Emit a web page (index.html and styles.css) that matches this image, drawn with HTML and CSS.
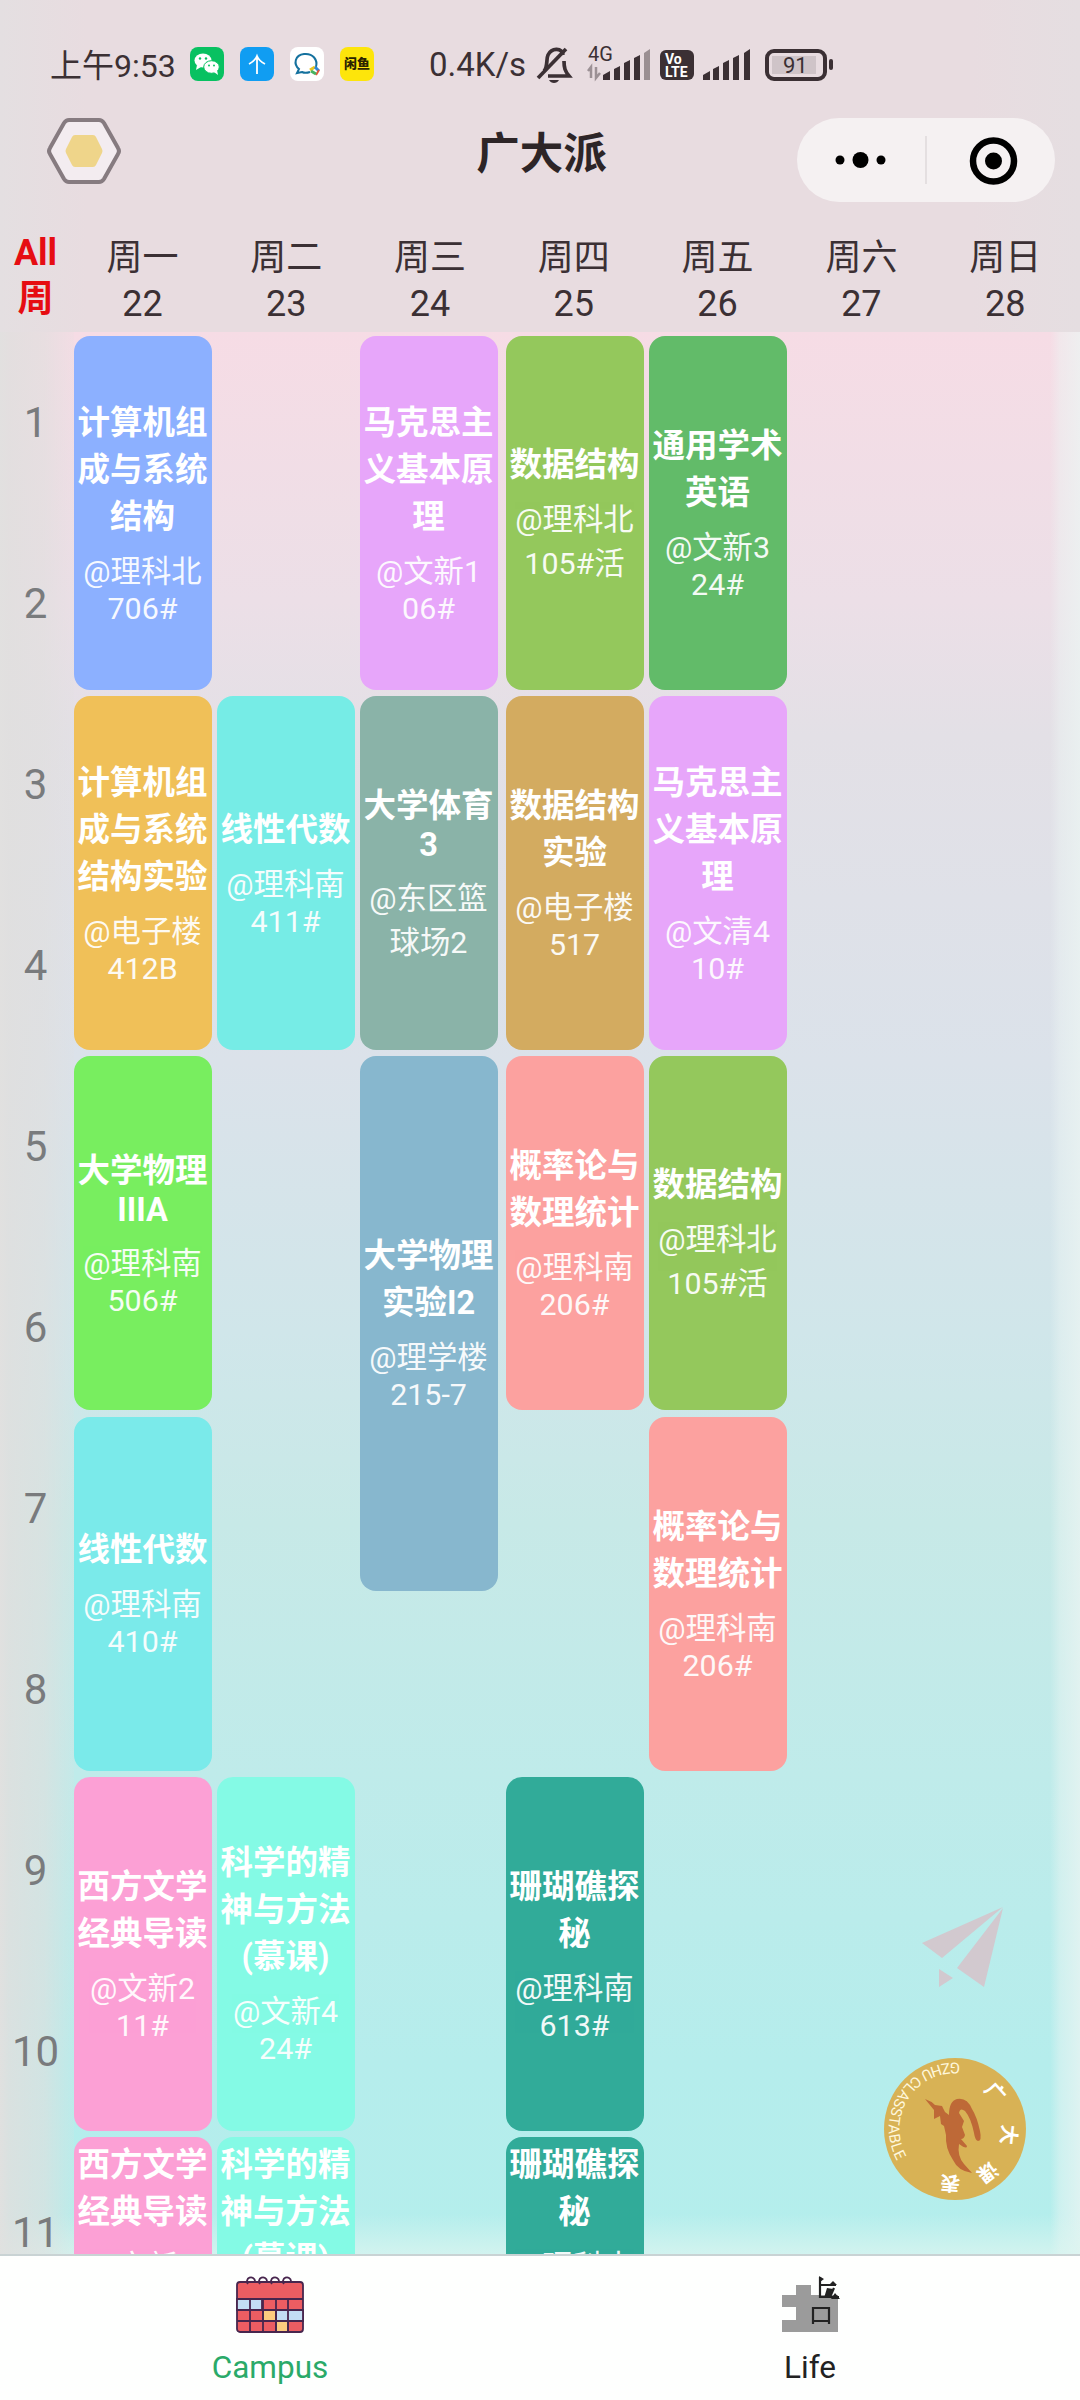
FILE: index.html
```html
<!DOCTYPE html>
<html lang="zh-CN">
<head>
<meta charset="utf-8">
<title>广大派</title>
<link rel="stylesheet" href="styles.css">
</head>
<body>
<div class="app">
  <header class="head">
    <div class="status">
      <span class="clock">上午9:53</span>
      <div class="apps">
        <svg width="34" height="34" viewBox="0 0 34 34"><rect width="34" height="34" rx="8" fill="#08c161"/><ellipse cx="13" cy="13.500" rx="8.500" ry="7" fill="#fff"/><path d="M7 18l-1 5 5-3z" fill="#fff"/><ellipse cx="21.500" cy="20" rx="7.800" ry="6.300" fill="#fff" stroke="#08c161"/><path d="M24 25l4 3-1-5z" fill="#fff"/><g fill="#08c161"><circle cx="10" cy="11.500" r="1.200"/><circle cx="16" cy="11.500" r="1.200"/><circle cx="19" cy="18.500" r="1"/><circle cx="24" cy="18.500" r="1"/></g></svg>
        <svg width="34" height="34" viewBox="0 0 34 34"><rect width="34" height="34" rx="8" fill="#109df2"/><path d="M17 27V9M9 17q6-3 8-8q2 5 8 8" fill="none" stroke="#fff" stroke-width="1.800"/></svg>
        <svg width="34" height="34" viewBox="0 0 34 34"><rect width="34" height="34" rx="8" fill="#fff"/><path d="M20 25c-3 1-6 1-8 0l-5 1 2-4C3 17 5 8 14 7c9-1 14 6 12 13" fill="none" stroke="#14719e" stroke-width="2"/><path d="M20 23l5-3" stroke="#e9c51e" stroke-width="3"/><path d="M25 20l4 4" stroke="#2f88d8" stroke-width="3"/><path d="M29 23l-3 5" stroke="#e4573d" stroke-width="2"/><path d="M21 24l5 3" stroke="#48b360" stroke-width="3"/></svg>
        <span class="xianyu">闲鱼</span>
      </div>
      <span class="speed">0.4K/s</span>
      <svg class="bell" width="36" height="40" viewBox="0 0 36 40" fill="none" stroke="#3b3034" stroke-width="3.700"><path d="M9 27c4-4 2-12 4-16 4-8 14-7 15 0M29 17c0 7 1 10 5 15H13"/><path d="M3 34L31 5"/><path d="M14 36h10c-2 4-8 4-10 0z" fill="#3b3034" stroke="none"/></svg>
      <svg class="signal" width="255" height="36" viewBox="0 0 255 36">
        <g fill="#3b3034"><path d="M18 34v-5l7-4v9zM29 34V23l6-3v14zM39 34V17l6-3v20zM49 34V12l6-3v25z"/><path d="M59 34V7l6-4v31z" opacity=".45"/><path d="M118 34v-5l7-4v9zM128 34V23l6-3v14zM138 34V17l6-3v20zM148 34V12l6-3v25zM159 34V7l6-4v31z"/><rect x="75" y="4" width="34" height="30" rx="6"/><rect x="244" y="13" width="4" height="11" rx="2"/></g>
        <path d="M3 25l3-4v11M11 21v11l4-5" fill="none" stroke="#9c9195" stroke-width="2.500"/>
        <rect x="182" y="5" width="58" height="28" rx="7" fill="none" stroke="#3b3034" stroke-width="4"/><rect x="187" y="10" width="44" height="18" fill="#cfc4c8"/>
        <text x="3" y="15" font-size="20" fill="#3b3034">4G</text><text x="80" y="18" font-size="14" font-weight="700" fill="#fff">Vo</text><text x="80" y="31" font-size="14" font-weight="700" fill="#fff">LTE</text><text x="198" y="27" font-size="22" fill="#3b3034">91</text>
      </svg>
    </div>
    <div class="nav">
      <svg class="hex" width="76" height="70" viewBox="0 0 76 70"><path d="M23 4h30q3 0 5 3l14 25q2 3 0 6L58 63q-2 3-5 3H23q-3 0-5-3L4 38q-2-3 0-6L18 7q2-3 5-3z" fill="#f3ecf0" stroke="#867b80" stroke-width="4"/><path d="M29 19h18q2 0 3 2l6 12q1 2 0 4l-6 12q-1 2-3 2H29q-2 0-3-2l-6-12q-1-2 0-4l6-12q1-2 3-2z" fill="#efd58a"/></svg>
      <h1>广大派</h1>
      <svg class="capsule" width="258" height="84" viewBox="0 0 258 84"><rect width="258" height="84" rx="42" fill="#f5f1f2"/><circle cx="43" cy="42" r="4.500"/><circle cx="63.500" cy="42" r="8"/><circle cx="84" cy="42" r="4.500"/><path d="M129 18v48" stroke="#d3cdcf"/><circle cx="196.500" cy="43" r="20.500" fill="none" stroke="#000" stroke-width="6.500"/><circle cx="196.500" cy="43" r="8.500"/></svg>
    </div>
    <div class="days">
      <div class="week">All<br>周</div>
      <div class="day">周一<br>22</div><div class="day">周二<br>23</div><div class="day">周三<br>24</div><div class="day">周四<br>25</div><div class="day">周五<br>26</div><div class="day">周六<br>27</div><div class="day">周日<br>28</div>
    </div>
  </header>
  <main class="body">
    <div class="periods"><span>1</span><span>2</span><span>3</span><span>4</span><span>5</span><span>6</span><span>7</span><span>8</span><span>9</span><span>10</span><span>11</span></div>
    <div class="table">
      <div class="card mon r1 blue"><b>计算机组<br>成与系统<br>结构</b><p>@理科北<br>706#</p></div>
      <div class="card wed r1 violet"><b>马克思主<br>义基本原<br>理</b><p>@文新1<br>06#</p></div>
      <div class="card thu r1 olive"><b>数据结构</b><p>@理科北<br>105#活</p></div>
      <div class="card fri r1 green"><b>通用学术<br>英语</b><p>@文新3<br>24#</p></div>
      <div class="card mon r3 amber"><b>计算机组<br>成与系统<br>结构实验</b><p>@电子楼<br>412B</p></div>
      <div class="card tue r3 cyan"><b>线性代数</b><p>@理科南<br>411#</p></div>
      <div class="card wed r3 sage"><b>大学体育<br>3</b><p>@东区篮<br>球场2</p></div>
      <div class="card thu r3 tan"><b>数据结构<br>实验</b><p>@电子楼<br>517</p></div>
      <div class="card fri r3 violet"><b>马克思主<br>义基本原<br>理</b><p>@文清4<br>10#</p></div>
      <div class="card mon r5 lime"><b>大学物理<br>IIIA</b><p>@理科南<br>506#</p></div>
      <div class="card wed r5 long steel"><b>大学物理<br>实验I2</b><p>@理学楼<br>215-7</p></div>
      <div class="card thu r5 coral"><b>概率论与<br>数理统计</b><p>@理科南<br>206#</p></div>
      <div class="card fri r5 olive"><b>数据结构</b><p>@理科北<br>105#活</p></div>
      <div class="card mon r7 aqua"><b>线性代数</b><p>@理科南<br>410#</p></div>
      <div class="card fri r7 coral"><b>概率论与<br>数理统计</b><p>@理科南<br>206#</p></div>
      <div class="card mon r9 pink"><b>西方文学<br>经典导读</b><p>@文新2<br>11#</p></div>
      <div class="card tue r9 mint"><b>科学的精<br>神与方法<br>(慕课)</b><p>@文新4<br>24#</p></div>
      <div class="card thu r9 teal"><b>珊瑚礁探<br>秘</b><p>@理科南<br>613#</p></div>
      <div class="card mon r11 pink"><b>西方文学<br>经典导读</b><p>@文新2<br>11#</p></div>
      <div class="card tue r11 mint"><b>科学的精<br>神与方法<br>(慕课)</b></div>
      <div class="card thu r11 teal"><b>珊瑚礁探<br>秘</b><p>@理科南<br>613#</p></div>
    </div>
    <div class="floating">
      <svg class="plane" width="90" height="90" viewBox="0 0 90 90" fill="#d2c9cf"><path d="M3 39L84 3 23 54zM84 4L65 83 38 64zM20 65l14 9-14 9z"/></svg>
      <svg class="seal" width="144" height="144" viewBox="-72 -72 144 144">
        <circle r="71" fill="#d8b255"/>
        <path id="ring" d="M5 -66A66 66 0 0 0 -56 35" fill="none"/>
        <text font-size="15" fill="#fff7dc"><textPath href="#ring" textLength="142">GZHU CLASSTABLE</textPath></text>
        <g class="seal-cn" font-size="20" fill="#fff" text-anchor="middle"><text transform="rotate(48) translate(0 -47)">广</text><text transform="rotate(96) translate(0 -47)">大</text><text transform="rotate(143) translate(0 -47)">课</text><text transform="rotate(185) translate(0 -47)">表</text></g>
        <path d="M-30-30q6 2 10 6l7 1 3 6 4 3q0-14 8-16 10-2 15 10 5 8 8 22 2 10-2 10-3-1-4-8-3-15-9-22-5-4-6 2l5 8-2 6 3 8q-1 4-4 4l6 7q0 4-8-2-2 12 5 20l8 9q-14-2-19-13-8-12-7-25l-2-9-3-2-1-8-6 3 0-9z" fill="#be6937"/>
      </svg>
    </div>
  </main>
  <nav class="tabs">
    <a class="tab active">
      <svg width="68" height="58" viewBox="0 0 68 58" stroke="#48264e" stroke-width="1.800"><rect x="1" y="7" width="66" height="50" rx="3" fill="#ec5d62"/><path fill="#c3def4" d="M1 24h25v11H1zM40 35h27v11H40z"/><path fill="#fccb7e" d="M27 35h13v11H27zM40 46h12v11H40z"/><path d="M1 24h66M1 35h66M1 46h66M14 24v33M27 24v33M40 24v33M52 24v33"/><g fill="none"><path d="M12 9a4 4 0 1 1 7-3M24 9a4 4 0 1 1 7-3M36 9a4 4 0 1 1 7-3M48 9a4 4 0 1 1 7-3"/></g></svg>
      <span>Campus</span>
    </a>
    <a class="tab">
      <svg width="60" height="58" viewBox="0 0 60 58"><path d="M2 20h14V10h15v10h27v37H2V45h14V32H2z" fill="#9b9b9b"/><g fill="none" stroke="#222" stroke-width="2.200"><path d="M40 2v21M40 10h16M39 22h20M54 13l-4 9M33 33v13h16V33zM33 46v3M49 46v3"/></g><path d="M39 1l5 3-4 3zM53 6l4 4h-8zM47 13l6 1-4 9h-5zM55 18l5 6h-9z" fill="#222"/></svg>
      <span>Life</span>
    </a>
  </nav>
</div>
</body>
</html>
```
FILE: styles.css
```css
* { box-sizing: border-box; }
body { margin: 0; font-family: Roboto, "Noto Sans CJK SC", sans-serif; }
p, h1 { margin: 0; font-weight: 400; }
svg { display: block; flex: none; overflow: visible; }

.app { width: 1080px; height: 2400px; display: flex; flex-direction: column; overflow: hidden; background: #fff; }

.head { height: 332px; display: flex; flex-direction: column; color: #3b3034;
  background: linear-gradient(90deg, #e4dfe1, #e8dce0 8%, #e8dce0 90%, #e5dee1); }

.status { height: 118px; padding: 10px 0 0 50px; display: flex; align-items: center; font-size: 32px; white-space: nowrap; }
.clock { width: 140px; padding-bottom: 2px; }
.apps { display: flex; gap: 16px; width: 239px; }
.xianyu { width: 34px; height: 34px; border-radius: 8px; background: #fde50b; color: #2b2300; font-size: 13px; font-weight: 900; line-height: 34px; text-align: center; }
.speed { width: 105px; font-size: 33px; }
.bell { margin-left: 1px; }
.signal { margin-left: 14px; }

.nav { height: 84px; display: grid; grid-template-columns: 258px 1fr 258px; padding: 0 25px; align-items: start; }
.hex { margin: -2px 0 0 21px; }
.nav h1 { padding: 5px 0 0 3px; text-align: center; font-size: 43.500px; font-weight: 700; color: #2d2527; line-height: 64px; }
.capsule { justify-self: end; }

.days { display: grid; grid-template-columns: 71px repeat(7, 143.800px); flex: 1; padding-top: 33px; text-align: center; font-size: 36px; line-height: 46px; }
.week { color: #e60d12; font-weight: 700; margin-top: -5px; }
.day { padding-right: 1px; }

.body { height: 1922px; flex: none; display: flex; position: relative; overflow: hidden;
  background:
    linear-gradient(0deg, rgba(222, 245, 240, .7), rgba(222, 245, 240, 0) 40px),
    linear-gradient(90deg, rgba(240, 240, 240, .7), rgba(240, 240, 240, 0) 8px),
    linear-gradient(270deg, rgba(236, 245, 243, .75), rgba(236, 245, 243, .45) 20px, rgba(236, 245, 243, 0) 30px),
    linear-gradient(#f6dce5, #ecdfe7 14%, #e3e0e6 21%, #dbe2ea 38%, #d0e6ea 52%, #c7e9e7 62%, #bfebea 75%, #b5edec 90%, #b4eeec); }
.periods { width: 74px; flex: none; display: flex; flex-direction: column; padding-right: 3px; color: #797b7d; font-size: 42px; text-align: center;
  background: linear-gradient(90deg, rgba(224, 223, 222, .9), rgba(224, 223, 222, .65) 60%, rgba(224, 223, 222, .15)); }
.periods span { height: 181px; line-height: 181px; flex: none; }

.table { display: grid; grid-template-columns: 143px 143px 146px 143px 138px; grid-template-rows: repeat(11, 174px); row-gap: 6.100px; padding-top: 4px; }
.card { width: 138px; border-radius: 16px; display: flex; flex-direction: column; align-items: center; justify-content: center; gap: 10px; padding: 0 1px 5px 0; overflow: hidden; color: #fff; text-align: center; white-space: nowrap; grid-row-end: span 2; }
.card b { font-size: 32.500px; font-weight: 700; }
.card p { font-size: 30.400px; opacity: .93; }

.mon { grid-column: 1; } .tue { grid-column: 2; } .wed { grid-column: 3; } .thu { grid-column: 4; } .fri { grid-column: 5; }
.r1 { grid-row-start: 1; } .r3 { grid-row-start: 3; } .r5 { grid-row-start: 5; } .r7 { grid-row-start: 7; } .r9 { grid-row-start: 9; }
.r11 { grid-row: 11 / span 1; justify-content: flex-start; padding-top: 1px; }
.long { grid-row-end: span 3; }

.blue { background: #8cb0ff; } .violet { background: #e7a6fa; } .olive { background: #94c85c; } .green { background: #62bb69; }
.amber { background: #f0c058; } .cyan { background: #76ece6; } .sage { background: #8ab3a8; } .tan { background: #d3ab60; }
.lime { background: #78ee5f; } .steel { background: #87b7ce; } .coral { background: #fca19f; } .aqua { background: #7aeaea; }
.pink { background: #fca0d5; } .mint { background: #84fae5; } .teal { background: #31ab99; }

.floating { position: absolute; left: 883px; top: 1572px; display: flex; flex-direction: column; gap: 63px; }
.plane { margin-left: 36px; }
.seal-cn { font-family: "Noto Sans CJK SC", sans-serif; font-weight: 700; }

.tabs { flex: 1; position: relative; border-top: 2px solid #c9d3d4; background: #fefffe; display: grid; grid-template-columns: 1fr 1fr; }
.tab { display: flex; flex-direction: column; align-items: center; padding-top: 19px; font-size: 31.500px; color: #222; }
.tab span { margin-top: 16px; line-height: 38px; }
.active { color: #2aaa69; }
```
